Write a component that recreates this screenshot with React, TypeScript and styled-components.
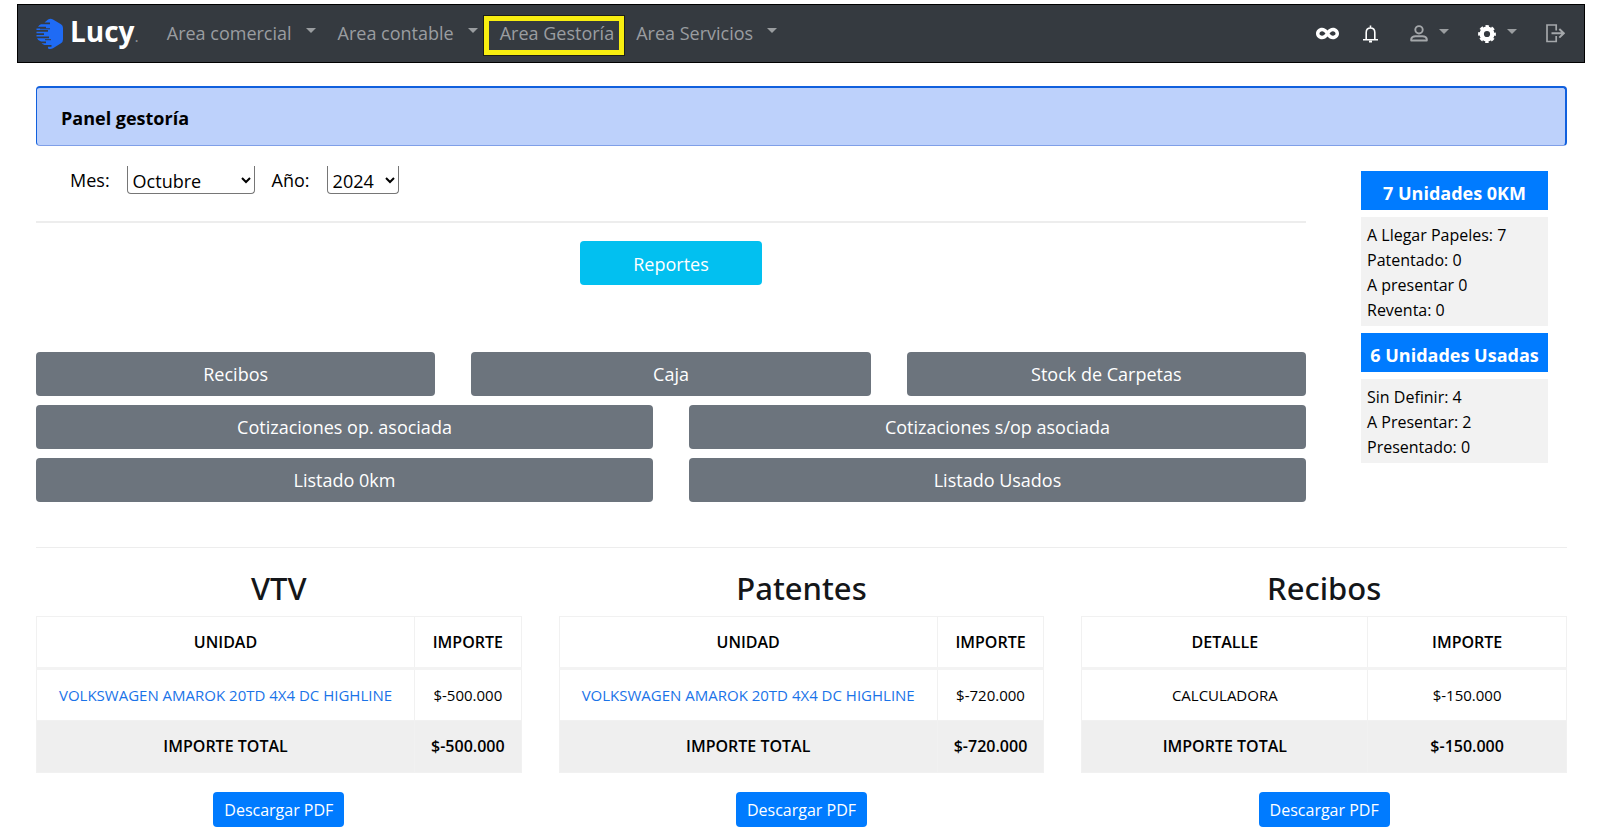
import React from "react";
import styled, { createGlobalStyle } from "styled-components";
import { FaInfinity } from "react-icons/fa";

const GlobalStyle = createGlobalStyle`
  * { box-sizing: border-box; }
  body {
    margin: 0;
    background: #fff;
    color: #000;
    font-family: "Open Sans", "Noto Sans", sans-serif;
    font-size: 18px;
  }
  button, select { font: inherit; }
`;

const Page = styled.div`
  padding: 4px 15px 5px 17px;
`;

const Navbar = styled.header`
  display: flex;
  align-items: center;
  height: 59px;
  padding: 0 19px 0 18px;
  background: #353a40;
  border: 1px solid #000;
`;

const Brand = styled.a`
  display: flex;
  align-items: center;
  gap: 6px;
  margin-right: 28px;
  color: #fff;
  font-size: 28px;
  font-weight: 700;
  line-height: 32px;
  text-decoration: none;
`;

const BrandDot = styled.small`
  color: #8d9196;
  font-size: 16px;
  font-weight: 400;
`;

const NavList = styled.nav`
  display: flex;
  align-items: center;
  gap: 22px;
  padding-bottom: 2px;
`;

const NavButton = styled.button`
  display: flex;
  align-items: center;
  gap: 14px;
  padding: 0;
  border: 0;
  background: none;
  color: #9a9da0;
  line-height: 24px;
  cursor: pointer;
`;

const NavLink = styled.a`
  position: relative;
  color: #9a9da0;
  line-height: 24px;
  text-decoration: none;

  &::after {
    content: "";
    position: absolute;
    inset: -5px -10px -10px -16px;
    border: 5px solid #f8ee10;
    outline: 1px solid #1c1e18;
  }
`;

const Caret = styled.span`
  width: 0;
  margin-bottom: 4px;
  border: 5px solid transparent;
  border-top-color: #9a9da0;
  border-bottom: 0;
`;

const Tools = styled.div`
  display: flex;
  align-items: center;
  gap: 29px;
  margin-left: auto;
`;

const ToolPair = styled.div`
  display: flex;
  align-items: center;
  gap: 24px;
  margin-right: 3px;
`;

const ToolButton = styled(NavButton)<{ $bright?: boolean }>`
  gap: 11px;
  color: ${(p) => (p.$bright ? "#fff" : "#a4a7aa")};
`;

const Main = styled.main`
  padding: 23px 18px 0 19px;
`;

const Banner = styled.h1`
  display: flex;
  align-items: center;
  height: 60px;
  margin: 0;
  padding: 2px 24px 0;
  border: solid #1160dd;
  border-width: 2px 2px 1px 1px;
  border-bottom-color: #7f9fe8;
  border-radius: 4px;
  background: #bdd1fb;
  font-size: 18px;
  font-weight: 700;
`;

const Overview = styled.div`
  display: grid;
  grid-template-columns: minmax(0, 1fr) 187px;
  gap: 55px;
  padding-right: 19px;
`;

const Filters = styled.form`
  display: flex;
  align-items: center;
  gap: 17px;
  margin-top: 20px;
  padding-left: 34px;
`;

const Field = styled.label`
  display: flex;
  align-items: center;
  gap: 17px;
`;

const Select = styled.select<{ $width: number }>`
  width: ${(p) => p.$width}px;
  height: 28px;
  padding: 2px 0 0 1px;
  border: 1px solid #767676;
  border-top: 0;
  border-radius: 0 0 4px 4px;
  background: #fff;
  color: #000;
`;

const Rule = styled.hr<{ $top: number; $size: number }>`
  height: ${(p) => p.$size}px;
  margin: ${(p) => p.$top}px 0 0;
  border: 0;
  background: #ededed;
`;

const ReportButton = styled.button`
  display: block;
  width: 182px;
  height: 44px;
  margin: 18px auto 67px;
  padding: 1px 0 0;
  border: 0;
  border-radius: 4px;
  background: #02c0f0;
  color: #fff;
  cursor: pointer;
`;

const ActionRow = styled.div`
  display: grid;
  grid-auto-flow: column;
  grid-auto-columns: minmax(0, 1fr);
  gap: 36px;
  margin-top: 9px;
`;

const ActionButton = styled.button`
  height: 44px;
  padding: 0 12px;
  border: 0;
  border-radius: 4px;
  background: #6c747d;
  color: #fff;
  cursor: pointer;
`;

const Sidebar = styled.aside`
  display: flex;
  flex-direction: column;
  gap: 7px;
  padding-top: 25px;
`;

const SideTitle = styled.h2`
  display: flex;
  align-items: center;
  justify-content: center;
  height: 39px;
  margin: 0;
  padding-top: 4px;
  background: #007bff;
  color: #fff;
  font-size: 18px;
  font-weight: 700;
  white-space: nowrap;
`;

const SideList = styled.ul`
  margin: 0;
  padding: 6px 6px 3px;
  background: #f2f2f2;
  font-size: 16px;
  line-height: 25px;
  list-style: none;
`;

const Reports = styled.div`
  display: grid;
  grid-template-columns: repeat(3, minmax(0, 1fr));
  gap: 37px;
  margin-top: 20px;
`;

const Report = styled.section`
  display: flex;
  flex-direction: column;
  align-items: center;
`;

const ReportTitle = styled.h2`
  margin: 0 0 8px;
  color: #141619;
  font-family: "Noto Sans", sans-serif;
  font-size: 31px;
  font-weight: 500;
  line-height: 40px;
`;

const Table = styled.table<{ $first: number }>`
  width: 100%;
  table-layout: fixed;
  border-collapse: collapse;
  font-size: 15px;
  line-height: 24px;
  text-align: center;

  th, td { height: 52px; padding: 0 0 1px; border: 1px solid #f1f1f1; }
  th:first-child { width: ${(p) => p.$first}%; }
  thead th { border-bottom: 3px solid #f3f3f3; }
  thead th, tfoot td { font-size: 16px; font-weight: 600; }
  tfoot { background: #efefef; }
`;

const UnitLink = styled.a`
  color: #1a73e8;
  text-decoration: none;
`;

const PdfButton = styled.button`
  width: 131px;
  height: 35px;
  margin-top: 19px;
  padding: 1px 0 0;
  border: 0;
  border-radius: 4px;
  background: #007bff;
  color: #fff;
  font-size: 16px;
  cursor: pointer;
`;

const LogoMark = () => (
  <svg width="28" height="32" viewBox="0 0 28 32" aria-hidden="true">
    <path
      d="M12 1.5Q14.500 0 17 1.500L25 6.200Q27 7.500 27 10V21.500Q27 24 25 25.300L17 30.300Q14.500 31.700 12 30.500V28.800H15.500V27H8.500Q6 26 5.500 25.200H10V23.600H5Q1.500 22 1 20.200H13V18.500H0.500V16.900H8V15.300H0.500V13.700H12V12H0.500V10.400H10V8.800H2Q3 6.700 5 6.200H14V4.600H8.500Z"
      fill="#1f6bf5"
    />
    <path d="M4 10.800H14M9 21.700H15" stroke="#353a40" strokeWidth="1" />
  </svg>
);

const BellIcon = () => (
  <svg width="15" height="18" viewBox="0 0 15 18" fill="none" stroke="currentColor" strokeWidth="1.600" aria-hidden="true">
    <path d="M3.200 14.500V7.500Q3.200 3 7.500 3T11.800 7.500V14.500M0 14.800H15M7.500 3V0.500" />
    <path d="M6 16.500H9" strokeWidth="2" />
  </svg>
);

const UserIcon = () => (
  <svg width="18" height="17" viewBox="0 0 18 17" fill="none" stroke="currentColor" strokeWidth="1.900" aria-hidden="true">
    <circle cx="9" cy="4.800" r="3.700" />
    <path d="M1.200 15.500V14Q1.800 11.200 5.500 11.200H12.500Q16.200 11.200 16.800 14V15.500Z" strokeLinejoin="round" />
  </svg>
);

const GearIcon = () => (
  <svg width="18" height="18" viewBox="0 0 18 18" fill="none" stroke="currentColor" aria-hidden="true">
    <circle cx="9" cy="9" r="5.300" strokeWidth="4.400" />
    <circle cx="9" cy="9" r="7.600" strokeWidth="2.600" strokeDasharray="3.400 2.569" strokeDashoffset="1.700" />
  </svg>
);

const ExitIcon = () => (
  <svg width="19" height="19" viewBox="0 0 19 19" fill="none" stroke="currentColor" strokeWidth="1.700" aria-hidden="true">
    <path d="M10.200 6.500V1H1V17.500H10.200V12" />
    <path d="M5.500 9.300H17.500M13.300 5L17.800 9.300L13.300 13.600" strokeWidth="2" />
  </svg>
);

const MONTHS = ["Enero", "Febrero", "Marzo", "Abril", "Mayo", "Junio", "Julio", "Agosto", "Septiembre", "Octubre", "Noviembre", "Diciembre"];

const ACTIONS = [
  ["Recibos", "Caja", "Stock de Carpetas"],
  ["Cotizaciones op. asociada", "Cotizaciones s/op asociada"],
  ["Listado 0km", "Listado Usados"],
];

const UNITS = [
  { title: "7 Unidades 0KM", lines: ["A Llegar Papeles: 7", "Patentado: 0", "A presentar 0", "Reventa: 0"] },
  { title: "6 Unidades Usadas", lines: ["Sin Definir: 4", "A Presentar: 2", "Presentado: 0"] },
];

const REPORTS = [
  { title: "VTV", head: "UNIDAD", item: "VOLKSWAGEN AMAROK 20TD 4X4 DC HIGHLINE", link: true, amount: "$-500.000", first: 78 },
  { title: "Patentes", head: "UNIDAD", item: "VOLKSWAGEN AMAROK 20TD 4X4 DC HIGHLINE", link: true, amount: "$-720.000", first: 78 },
  { title: "Recibos", head: "DETALLE", item: "CALCULADORA", link: false, amount: "$-150.000", first: 59 },
];

const Dropdown = ({ label }: { label: string }) => (
  <NavButton type="button" aria-haspopup="menu">
    {label}
    <Caret />
  </NavButton>
);

export default function App() {
  return (
    <Page>
      <GlobalStyle />
      <Navbar>
        <Brand href="#">
          <LogoMark />
          <span>Lucy<BrandDot>.</BrandDot></span>
        </Brand>
        <NavList>
          <Dropdown label="Area comercial" />
          <Dropdown label="Area contable" />
          <NavLink href="#gestoria">Area Gestoría</NavLink>
          <Dropdown label="Area Servicios" />
        </NavList>
        <Tools>
          <ToolPair>
            <ToolButton type="button" $bright aria-label="Infinito"><FaInfinity size={23} /></ToolButton>
            <ToolButton type="button" $bright aria-label="Notificaciones"><BellIcon /></ToolButton>
          </ToolPair>
          <ToolButton type="button" aria-label="Usuario"><UserIcon /><Caret /></ToolButton>
          <ToolButton type="button" $bright aria-label="Configuración"><GearIcon /><Caret /></ToolButton>
          <ToolButton type="button" aria-label="Salir"><ExitIcon /></ToolButton>
        </Tools>
      </Navbar>
      <Main>
        <Banner>Panel gestoría</Banner>
        <Overview>
          <div>
            <Filters>
              <Field>
                Mes:
                <Select $width={128} defaultValue="Octubre">
                  {MONTHS.map((m) => <option key={m}>{m}</option>)}
                </Select>
              </Field>
              <Field>
                Año:
                <Select $width={72} defaultValue="2024">
                  <option>2023</option>
                  <option>2024</option>
                </Select>
              </Field>
            </Filters>
            <Rule $top={27} $size={2} />
            <ReportButton type="button">Reportes</ReportButton>
            {ACTIONS.map((row) => (
              <ActionRow key={row[0]}>
                {row.map((label) => <ActionButton type="button" key={label}>{label}</ActionButton>)}
              </ActionRow>
            ))}
          </div>
          <Sidebar>
            {UNITS.map((group) => (
              <React.Fragment key={group.title}>
                <SideTitle>{group.title}</SideTitle>
                <SideList>
                  {group.lines.map((line) => <li key={line}>{line}</li>)}
                </SideList>
              </React.Fragment>
            ))}
          </Sidebar>
        </Overview>
        <Rule $top={45} $size={1} />
        <Reports>
          {REPORTS.map((r) => (
            <Report key={r.title}>
              <ReportTitle>{r.title}</ReportTitle>
              <Table $first={r.first}>
                <thead>
                  <tr><th scope="col">{r.head}</th><th scope="col">IMPORTE</th></tr>
                </thead>
                <tbody>
                  <tr>
                    <td>{r.link ? <UnitLink href="#unidad">{r.item}</UnitLink> : r.item}</td>
                    <td>{r.amount}</td>
                  </tr>
                </tbody>
                <tfoot>
                  <tr><td>IMPORTE TOTAL</td><td>{r.amount}</td></tr>
                </tfoot>
              </Table>
              <PdfButton type="button">Descargar PDF</PdfButton>
            </Report>
          ))}
        </Reports>
      </Main>
    </Page>
  );
}
